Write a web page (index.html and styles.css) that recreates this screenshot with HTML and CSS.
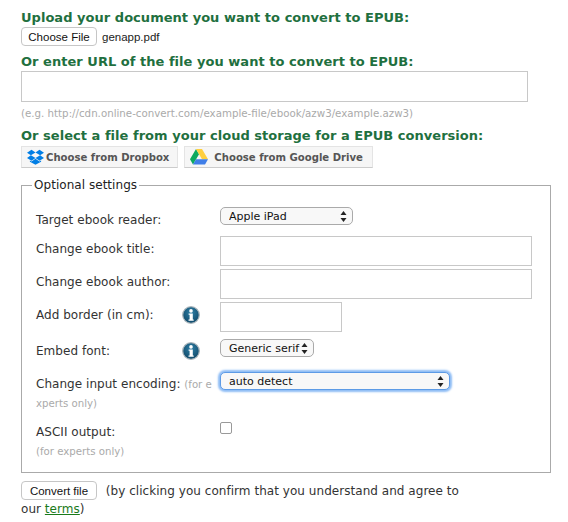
FILE: index.html
```html
<!DOCTYPE html>
<html>

<head>
    <meta charset="utf-8">
    <meta name="viewport" content="width=device-width,initial-scale=1.0">
    <title>Convert to EPUB</title>
    <link rel="stylesheet" href="styles.css">
</head>

<body>
    <form id="wrap">
        <h3>Upload your document you want to convert to EPUB:</h3>
        <div class="file-line">
            <button type="button" class="btn">Choose File</button>
            <span class="file-name">genapp.pdf</span>
        </div>

        <h3 class="url-title">Or enter URL of the file you want to convert to EPUB:</h3>
        <input type="text" class="url-input">
        <div class="hint">(e.g. http://cdn.online-convert.com/example-file/ebook/azw3/example.azw3)</div>

        <h3 class="cloud-title">Or select a file from your cloud storage for a EPUB conversion:</h3>
        <div class="cloud-line">
            <div class="cloud-btn">
                <svg width="17" height="16" viewBox="0 0 17 16">
                    <path fill="#007ee5" d="M4.5 .8 0 3.7l3.9 2.6 4.6-2.8zM12.5 .8 8.5 3.5l4.6 2.8L17 3.7zM0 8.9l4.5 2.9 4-2.7-4.6-2.8zM13.100 6.300 8.500 9.100l4 2.700L17 8.900zM8.500 9.800l-4 2.700-1.600-1v1.200l5.600 3.100 5.600-3.100v-1.200l-1.600 1z"/>
                </svg>
                Choose from Dropbox
            </div>
            <div class="cloud-btn cloud-drive">
                <svg width="18" height="16" viewBox="0 0 18 16">
                    <path fill="#0da960" d="M6 0 0 10.300l3 5.200 6-10.300z"/>
                    <path fill="#ffcf3f" d="M6 0h6l6 10.300h-6z"/>
                    <path fill="#3f7ee8" d="M3 15.500h12l3-5.200H6z"/>
                </svg>
                Choose from Google Drive
            </div>
        </div>

        <fieldset>
            <legend>Optional settings</legend>
            <div class="settings">
                <div class="label">Target ebook reader:</div>
                <div class="field"><select class="sel sel-reader"><option>Apple iPad</option></select></div>

                <div class="label">Change ebook title:</div>
                <div class="field"><input type="text" class="text-long"></div>

                <div class="label">Change ebook author:</div>
                <div class="field"><input type="text" class="text-long"></div>

                <div class="label">Add border (in cm):
                    <svg class="info" viewBox="0 0 18 18"><use href="#info"></use></svg>
                </div>
                <div class="field"><input type="text" class="text-short"></div>

                <div class="label row-embed">Embed font:
                    <svg class="info" viewBox="0 0 18 18"><use href="#info"></use></svg>
                </div>
                <div class="field"><select class="sel sel-font"><option>Generic serif</option></select></div>

                <div class="label label-tall row-encoding">Change input encoding: <small>(for experts only)</small></div>
                <div class="field"><select class="sel sel-encoding"><option>auto detect</option></select></div>

                <div class="label label-tall">ASCII output:<br><small>(for experts only)</small></div>
                <div class="field field-check"><input type="checkbox" class="check"></div>
            </div>
        </fieldset>

        <div class="submit-line">
            <button type="button" class="btn">Convert file</button>
            <span class="agree">(by clicking you confirm that you understand and agree to</span>
            <div>our <a href="#">terms</a>)</div>
        </div>
    </form>

    <svg width="0" height="0" class="defs">
        <defs>
            <radialGradient id="info-fill" cx="50%" cy="35%" r="70%">
                <stop offset="0" stop-color="#2f7fa5"/>
                <stop offset="1" stop-color="#0d4464"/>
            </radialGradient>
            <g id="info">
                <circle cx="9" cy="9" r="8.300" fill="url(#info-fill)" stroke="#a9b4ba" stroke-width="1.200"/>
                <circle cx="9" cy="4.900" r="1.800" fill="#fff"/>
                <path fill="#fff" d="M6.600 7.400h4.200v6h.9v1.300H6.500v-1.300h1.100v-4.700h-1z"/>
            </g>
        </defs>
    </svg>
</body>

</html>
```

FILE: styles.css
```css
html,
body {
    margin: 0;
    padding: 0;
    background: #fff;
}

body {
    font-family: "DejaVu Sans", Verdana, sans-serif;
    font-size: 12px;
    letter-spacing: .04px;
    color: #333;
}

#wrap {
    padding: 10px 17px 0 21px;
}

h3 {
    margin: 0;
    font-size: 13px;
    line-height: 16px;
    font-weight: bold;
    letter-spacing: .03px;
    color: #1f7040;
}

.btn {
    width: 76px;
    height: 19px;
    padding: 0;
    border: 1px solid #c6c6c6;
    border-radius: 4px;
    background: #fff;
    font-family: "Liberation Sans", Arial, sans-serif;
    font-size: 11.5px;
    color: #111;
    box-sizing: border-box;
}

.file-line {
    display: flex;
    align-items: center;
    gap: 5px;
    margin-top: 1px;
}

.file-name {
    font-family: "Liberation Sans", Arial, sans-serif;
    font-size: 11.5px;
    letter-spacing: 0;
    color: #222;
}

.url-title {
    margin-top: 8px;
}

.url-input {
    display: block;
    width: 507px;
    height: 31px;
    margin-top: 1px;
    padding: 0;
    border: 1px solid #c8c8c8;
    box-sizing: border-box;
    outline: none;
}

.hint {
    margin-top: 4px;
    font-size: 10.25px;
    line-height: 14px;
    letter-spacing: 0;
    color: #aaa;
}

.cloud-title {
    margin-top: 8px;
}

.cloud-line {
    display: flex;
    gap: 6px;
    margin-top: 2px;
}

.cloud-btn {
    display: flex;
    align-items: center;
    gap: 2px;
    height: 22px;
    padding: 0 8px 0 5px;
    border: 1px solid #e4e4e4;
    border-bottom-color: #ccc;
    background: #f6f6f6;
    font-size: 10.1px;
    font-weight: bold;
    letter-spacing: 0;
    color: #555;
    box-sizing: border-box;
}

.cloud-drive {
    gap: 6px;
    padding-right: 9px;
}

fieldset {
    margin: 10px 0 0 0;
    padding: 15px 12px 0 14px;
    width: 530px;
    height: 295px;
    border: 1px solid #aaa;
    box-sizing: border-box;
    min-width: 0;
}

legend {
    padding: 0 2px;
    margin-left: -4px;
    font-size: 12px;
    line-height: 14px;
    color: #222;
}

.settings {
    display: grid;
    grid-template-columns: 177px 1fr;
    grid-template-rows: 29px 33px 33px 37px 33px 49px 47px;
    column-gap: 7px;
}

.label {
    position: relative;
    padding-top: 3px;
    line-height: 20px;
    box-sizing: border-box;
    white-space: nowrap;
}

.row-embed {
    padding-top: 2px;
}

.label-tall {
    padding-top: 2px;
    white-space: normal;
    word-break: break-all;
    line-height: 19px;
}

.row-encoding {
    padding-top: 3px;
}

small {
    font-size: 10.2px;
    letter-spacing: 0;
    color: #aaa;
}

.info {
    position: absolute;
    left: 146px;
    top: 4px;
    width: 18px;
    height: 18px;
}

.row-embed .info {
    top: 3px;
}

.defs {
    position: absolute;
}

.text-long,
.text-short {
    display: block;
    height: 30px;
    padding: 0;
    border: 1px solid #c8c8c8;
    box-sizing: border-box;
    outline: none;
}

.text-long {
    width: 312px;
}

.text-short {
    width: 122px;
}

.sel {
    display: block;
    height: 18px;
    padding: 0 0 0 8px;
    border: 1px solid #aaa;
    border-radius: 5px;
    box-sizing: border-box;
    appearance: none;
    font-family: "DejaVu Sans", Verdana, sans-serif;
    font-size: 11px;
    color: #111;
    background: #f8f8f8 url("data:image/svg+xml,%3Csvg xmlns='http://www.w3.org/2000/svg' width='7' height='11'%3E%3Cpath d='M3.500 0 6.500 4h-6zM3.500 11 .5 7h6z' fill='%23222'/%3E%3C/svg%3E") no-repeat right 5px center;
}

.sel-reader {
    width: 133px;
}

.sel-font {
    width: 94px;
}

.sel-encoding {
    width: 230px;
    border-color: #5d9be6;
    box-shadow: 0 0 2px 2px #8fbdf5;
}

.field-check {
    padding-top: 1px;
}

.check {
    display: block;
    width: 12px;
    height: 12px;
    margin: 0;
    border: 1px solid #999;
    border-radius: 2px;
    background: #fff;
    appearance: none;
}

.submit-line {
    margin-top: 8px;
    line-height: 18px;
}

.agree {
    margin-left: 5px;
}

a {
    color: #1a7a1a;
}
```
